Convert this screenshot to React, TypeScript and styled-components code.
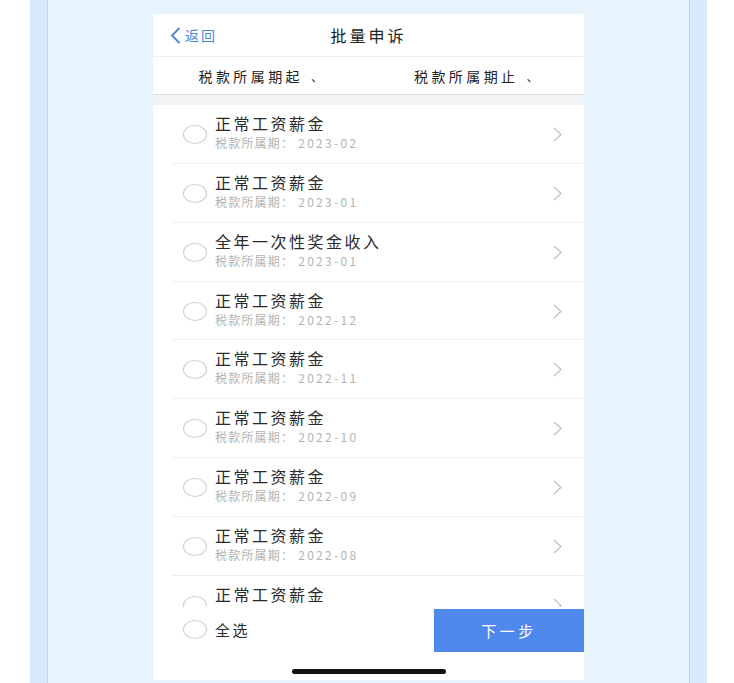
import React from "react";
import styled, { createGlobalStyle } from "styled-components";

const Global = createGlobalStyle`
  html, body { margin: 0; padding: 0; background: #ffffff; }
  body { font-family: "Noto Sans CJK SC", "Noto Sans", sans-serif; }
  * { box-sizing: border-box; }
`;

const Page = styled.div`
  width: 734px;
  height: 683px;
  overflow: hidden;
  display: flex;
  padding-left: 30px;
  background: #ffffff;
`;

const Panel = styled.div`
  width: 677px;
  height: 683px;
  padding: 0 17px;
  background: #d8eafc;
`;

const PanelInner = styled.div`
  height: 100%;
  border-left: 1px solid #b7d7f4;
  border-right: 1px solid #b7d7f4;
  background: #e7f4fe;
  display: flex;
  justify-content: center;
  align-items: flex-start;
`;

const Phone = styled.div`
  width: 431px;
  height: 666px;
  margin-top: 14px;
  background: #ffffff;
  overflow: hidden;
  display: flex;
  flex-direction: column;
`;

const Header = styled.div`
  position: relative;
  height: 43px;
  flex-shrink: 0;
  display: flex;
  align-items: center;
  justify-content: center;
  border-bottom: 1px solid #efefef;
`;

const Back = styled.div`
  position: absolute;
  left: 17px;
  top: 0;
  bottom: 0;
  display: flex;
  align-items: center;
  gap: 4px;
  color: #4a85d9;
  font-size: 14px;
  letter-spacing: 2px;
`;

const Title = styled.div`
  font-size: 16px;
  letter-spacing: 3px;
  color: #222;
`;

const FilterBar = styled.div`
  height: 38px;
  flex-shrink: 0;
  display: flex;
  border-bottom: 1px solid #dedede;
`;

const FilterItem = styled.div`
  flex: 1;
  display: flex;
  align-items: center;
  justify-content: center;
  gap: 8px;
  font-size: 14px;
  letter-spacing: 3.4px;
  color: #222;
`;

const Mark = styled.span`
  font-size: 12px;
  color: #333;
  letter-spacing: 0;
  margin-top: 2px;
`;

const Gap = styled.div`
  height: 10px;
  flex-shrink: 0;
  background: #f2f3f5;
`;

const List = styled.div`
  flex: 1;
  min-height: 0;
  overflow: hidden;
  display: flex;
  flex-direction: column;
`;

const Row = styled.div`
  position: relative;
  height: 58.86px;
  flex-shrink: 0;
  display: flex;
  align-items: center;
  padding-left: 30px;
  padding-right: 22px;
  &::after {
    content: "";
    position: absolute;
    left: 19px;
    right: 0;
    bottom: 0;
    height: 1px;
    background: #eeeeee;
  }
`;

const Radio = styled.div`
  width: 24px;
  height: 19px;
  border-radius: 50%;
  border: 1px solid #cfcfcf;
  flex-shrink: 0;
`;

const TextCol = styled.div`
  flex: 1;
  align-self: flex-start;
  display: flex;
  flex-direction: column;
  margin-left: 8px;
  padding-top: 8px;
`;

const ItemTitle = styled.div`
  font-size: 16px;
  line-height: 20px;
  letter-spacing: 2.5px;
  color: #2a2a2a;
`;

const ItemSub = styled.div`
  margin-top: 2px;
  font-size: 12px;
  line-height: 16px;
  letter-spacing: 1.2px;
  color: #b3b3b3;
`;

const Period = styled.span`
  margin-left: 4px;
  letter-spacing: 2.3px;
`;

const BottomBar = styled.div`
  height: 73px;
  flex-shrink: 0;
  background: #ffffff;
  display: flex;
  flex-direction: column;
  align-items: center;
`;

const ActionRow = styled.div`
  width: 100%;
  height: 45px;
  display: flex;
  align-items: center;
  padding-left: 30px;
`;

const SelectAll = styled.div`
  flex: 1;
  display: flex;
  align-items: center;
  gap: 8px;
  font-size: 15px;
  letter-spacing: 2.5px;
  color: #2a2a2a;
`;

const NextButton = styled.div`
  width: 150px;
  height: 43px;
  align-self: flex-end;
  background: #4f89ee;
  color: #ffffff;
  display: flex;
  align-items: center;
  justify-content: center;
  font-size: 15px;
  letter-spacing: 3.5px;
`;

const HomeIndicator = styled.div`
  margin-top: 17px;
  width: 154px;
  height: 5px;
  border-radius: 3px;
  background: #111;
`;

type Item = { title: string; period?: string };

const items: Item[] = [
  { title: "正常工资薪金", period: "2023-02" },
  { title: "正常工资薪金", period: "2023-01" },
  { title: "全年一次性奖金收入", period: "2023-01" },
  { title: "正常工资薪金", period: "2022-12" },
  { title: "正常工资薪金", period: "2022-11" },
  { title: "正常工资薪金", period: "2022-10" },
  { title: "正常工资薪金", period: "2022-09" },
  { title: "正常工资薪金", period: "2022-08" },
  { title: "正常工资薪金" },
];

const Chevron = () => (
  <svg width="9" height="15" viewBox="0 0 9 15">
    <polyline points="1,1 8,7.5 1,14" fill="none" stroke="#c2c2c2" strokeWidth="1.3" />
  </svg>
);

const BackArrow = () => (
  <svg width="11" height="17" viewBox="0 0 11 17">
    <polyline points="9.5,1 2,8.5 9.5,16" fill="none" stroke="#4a85d9" strokeWidth="1.8" />
  </svg>
);

export default function App() {
  return (
    <>
      <Global />
      <Page>
        <Panel>
          <PanelInner>
            <Phone>
              <Header>
                <Back>
                  <BackArrow />
                  <span>返回</span>
                </Back>
                <Title>批量申诉</Title>
              </Header>
              <FilterBar>
                <FilterItem>
                  税款所属期起<Mark>、</Mark>
                </FilterItem>
                <FilterItem>
                  税款所属期止<Mark>、</Mark>
                </FilterItem>
              </FilterBar>
              <Gap />
              <List>
                {items.map((it, i) => (
                  <Row key={i}>
                    <Radio />
                    <TextCol>
                      <ItemTitle>{it.title}</ItemTitle>
                      {it.period && (
                        <ItemSub>
                          税款所属期：<Period>{it.period}</Period>
                        </ItemSub>
                      )}
                    </TextCol>
                    <Chevron />
                  </Row>
                ))}
              </List>
              <BottomBar>
                <ActionRow>
                  <SelectAll>
                    <Radio />
                    <span>全选</span>
                  </SelectAll>
                  <NextButton>下一步</NextButton>
                </ActionRow>
                <HomeIndicator />
              </BottomBar>
            </Phone>
          </PanelInner>
        </Panel>
      </Page>
    </>
  );
}
